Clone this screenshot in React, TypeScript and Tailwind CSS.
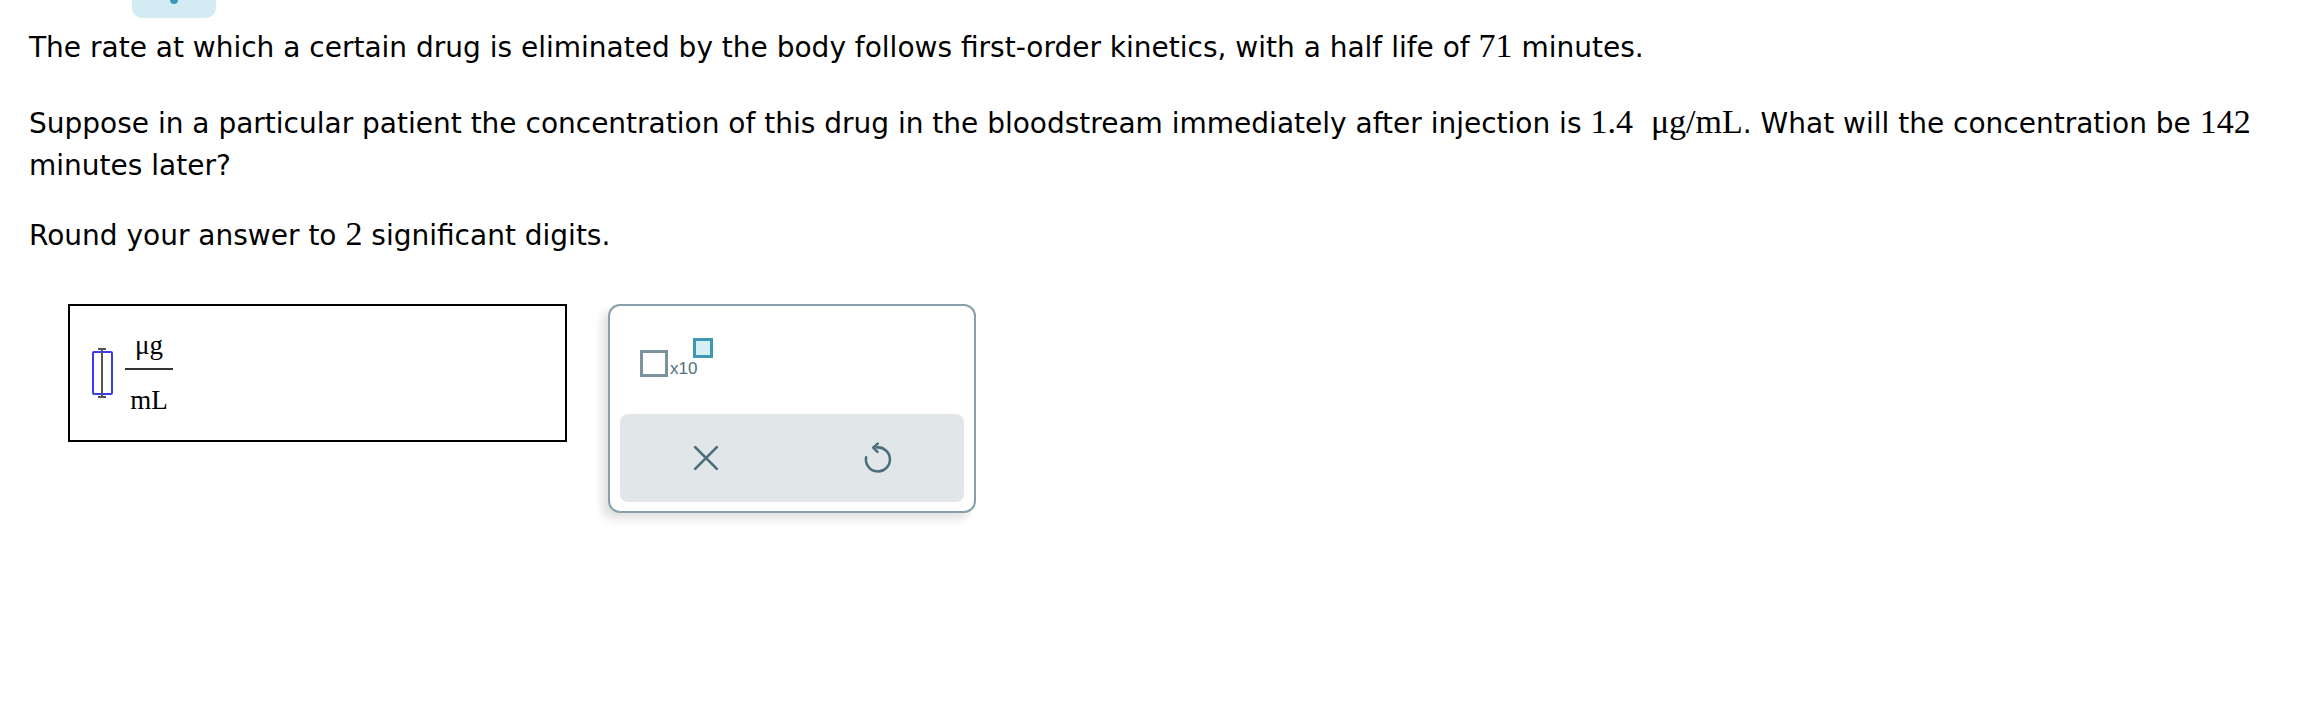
import React from "react";

const sans = "font-['DejaVu_Sans','Verdana',sans-serif]";
const serif = "font-['Liberation_Serif','Times_New_Roman',serif]";

const M = ({ children }: { children: React.ReactNode }) => (
  <span className={`${serif} text-[34px]`}>{children}</span>
);

const UndoIcon = () => (
  <svg width="32" height="32" viewBox="0 0 24 24" fill="none" stroke="#4b6e7b" strokeWidth="1.9" strokeLinecap="round" strokeLinejoin="round">
    <path d="M11 4.1 A9 9 0 1 1 3.1 11.4" />
    <path d="M11.8 1.2 L8.4 4.2 L11.6 7.4" />
  </svg>
);

const App = () => {
  return (
    <div className={`relative min-h-[728px] bg-white text-black ${sans}`}>
      {/* top tab peeking */}
      <div className="absolute left-[132px] top-0 h-[18px] w-[84px] rounded-b-[10px] bg-[#d3ecf3]">
        <div className="mx-auto h-[4px] w-[8px] rounded-b-full bg-[#3d9ab5]" />
      </div>

      <div className="px-[29px] pt-[25px] text-[28px] leading-[42px]">
        <p>
          The rate at which a certain drug is eliminated by the body follows first-order kinetics, with a half life of <M>71</M> minutes.
        </p>
        <p className="mt-[32px]">
          Suppose in a particular patient the concentration of this drug in the bloodstream immediately after injection is{" "}
          <M>
            1.4<span className="ml-[18px]">μg/mL</span>
          </M>
          . What will the concentration be <M>142</M> minutes later?
        </p>
        <p className="mt-[26px]">
          Round your answer to <M>2</M> significant digits.
        </p>
      </div>

      <div className="mt-[47px] flex items-start gap-[41px] pl-[68px]">
        {/* answer box */}
        <div className="flex h-[138px] w-[499px] items-center border-2 border-black pl-[21px]">
          <div className="relative flex h-[50px] w-[22px] items-center justify-center">
            <div className="h-[44px] w-[21px] rounded-[2px] border-2 border-[#3b3bf5]" />
            <div className="absolute left-1/2 top-0 h-full w-[2px] -translate-x-1/2 bg-[#555]" />
            <div className="absolute left-1/2 top-0 h-[2px] w-[8px] -translate-x-1/2 bg-[#555]" />
            <div className="absolute bottom-0 left-1/2 h-[2px] w-[8px] -translate-x-1/2 bg-[#555]" />
          </div>
          <div className={`ml-[12px] flex flex-col items-center ${serif} text-[27px] leading-none`}>
            <span className="px-[2px] pb-[9px]">μg</span>
            <span className="h-[2px] w-[48px] bg-[#333]" />
            <span className="pt-[17px]">mL</span>
          </div>
        </div>

        {/* keypad panel */}
        <div className="flex h-[209px] w-[368px] flex-col rounded-[12px] border-2 border-[#87a0aa] bg-white shadow-[-6px_6px_10px_rgba(0,0,0,0.12)]">
          <div className="flex h-[108px] items-start pl-[30px] pt-[32px]">
            <div className="mt-[12px] h-[27px] w-[28px] border-[3px] border-[#7b939c]" />
            <span className="ml-[2px] mt-[22px] font-['Liberation_Sans',sans-serif] text-[17px] leading-none text-[#4f6f7b]">x10</span>
            <div className="ml-[-4px] h-[20px] w-[20px] border-[3px] border-[#3d98b3] bg-[#d6eef5]" />
          </div>
          <div className="mx-[10px] grid h-[88px] grid-cols-2 items-center rounded-[8px] bg-[#e1e6e9]">
            <div className="flex justify-center">
              <svg width="26" height="26" viewBox="0 0 24 24" fill="none" stroke="#4b6e7b" strokeWidth="2.5" strokeLinecap="round">
                <path d="M2 2 L22 22 M22 2 L2 22" />
              </svg>
            </div>
            <div className="flex justify-center">
              <UndoIcon />
            </div>
          </div>
        </div>
      </div>
    </div>
  );
};

export default App;
